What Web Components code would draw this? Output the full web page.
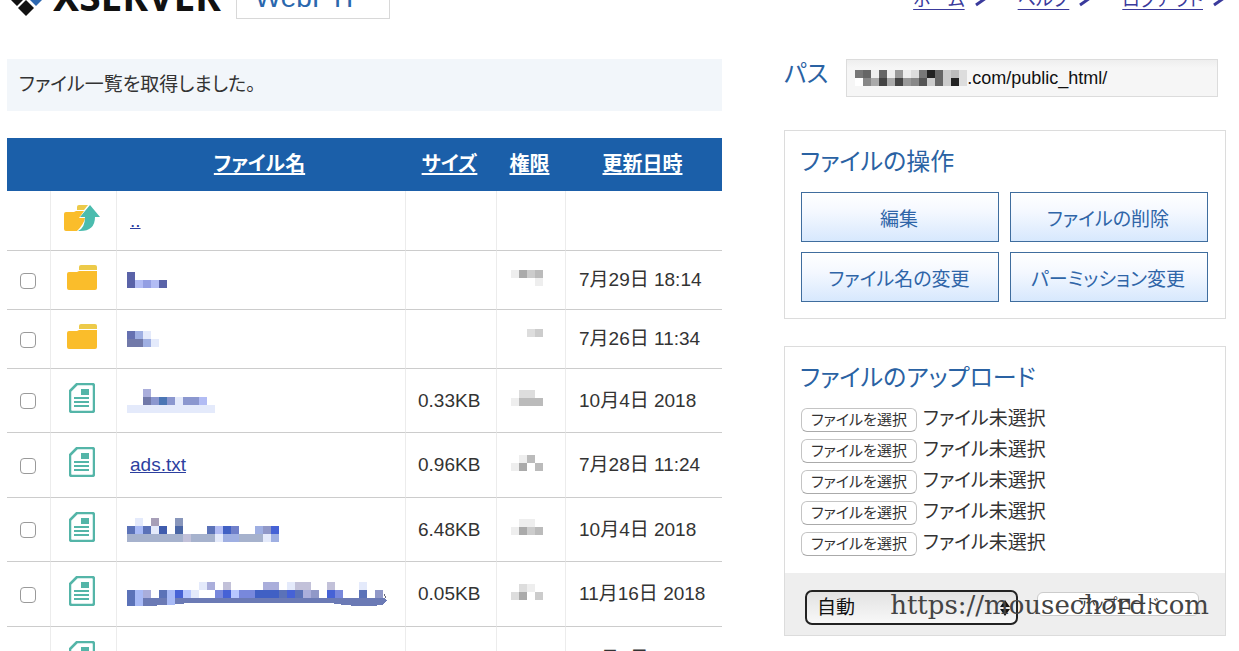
<!DOCTYPE html>
<html lang="ja">
<head>
<meta charset="utf-8">
<meta name="viewport" content="width=device-width, initial-scale=1">
<title>WebFTP</title>
<style>
html { scrollbar-width: none; }
body { margin: 0; background: #fff; color: #333; font: 19px/28px "Liberation Sans", "Noto Sans CJK JP", sans-serif; font-feature-settings: "palt"; }
</style>
</head>
<body>
<ftp-app></ftp-app>
<script>
function define(name, html, setup) {
  const template = document.createElement('template');
  template.innerHTML = '<style>*{box-sizing:border-box}button,input,select{font:inherit;font-feature-settings:inherit;margin:0}</style>' + html;
  customElements.define(name, class extends HTMLElement {
    constructor() {
      super();
      this.attachShadow({ mode: 'open' });
    }
    connectedCallback() {
      if (this.shadowRoot.childNodes.length) return;
      this.shadowRoot.append(template.content.cloneNode(true));
      if (setup) setup(this, this.shadowRoot);
    }
  });
}

/* Redacted text: 8px cells, hex digits are greys, capitals are palette colours */
const TINTS = {
  A: '#5a63a8', B: '#b2bcf4', C: '#949fe3', D: '#6570b0', E: '#9fafe2', L: '#e4eafb',
  G: '#7179a9', P: '#aaaedb', S: '#4b76b5', N: '#8b97cf', Q: '#a79fb8', T: '#8896bb',
  U: '#5b72b8', V: '#a8baf6', W: '#3f5cad', X: '#4a66a5', Y: '#4060c4', Z: '#7080ca',
  M: '#a6b2cd', K: '#c2c1d9', R: '#4662d6', H: '#b8c8ff', J: '#7888dc', I: '#9098c8'
};
define('pixel-mosaic', `
<style>:host{display:block}svg{display:block}</style><svg aria-hidden="true"></svg>`, (host, root) => {
  const rows = host.getAttribute('cells').split('/');
  const cols = Math.max(...rows.map(r => r.length));
  let out = '';
  rows.forEach((row, y) => [...row].forEach((c, x) => {
    if (c === '.') return;
    out += `<rect x="${x * 8}" y="${y * 8}" width="8" height="8" fill="${TINTS[c] || '#' + c + c + c}"/>`;
  }));
  if (host.hasAttribute('stroke')) {
    out += '<path d="M0 16H8V24H0Z" fill="#5b72b8"/><path d="M8 16H16V24H8Z" fill="#a8baf6"/><path d="M16 16H258L260 19L255 23Q232 26 204 21H80Q52 21 44 23L16 24Z" fill="#6b7ab5"/><path d="M40 16H48V23H40Z" fill="#a8baf6"/><path d="M257 12L259 16" stroke="#667" fill="none"/>';
  }
  const svg = root.querySelector('svg');
  svg.setAttribute('width', cols * 8 + (host.hasAttribute('stroke') ? 8 : 0));
  svg.setAttribute('height', rows.length * 8);
  svg.setAttribute('shape-rendering', 'crispEdges');
  svg.innerHTML = out;
});

const ICONS = {
  folder: '<svg width="30" height="25" viewBox="0 0 30 25"><path d="M12 5V2Q12 0 14 0H28Q30 0 30 2V5Z" fill="#edca49"/><path d="M0 9Q0 7 2 7H10L12 6H30V23Q30 25 28 25H2Q0 25 0 23Z" fill="#fabd2b"/></svg>',
  up: '<svg width="36" height="26" viewBox="0 0 36 26"><path d="M13 5V2Q13 0 15 0H24L20 5Z" fill="#edca49"/><path d="M0 9Q0 7 2 7H10L12 6H20L15 13H21Q20 19 13 26H2Q0 26 0 24Z" fill="#fabd2b"/><path d="M26 0L36 12H31Q31 26 16 26H14Q21 23 21 12H16Z" fill="#4bbcae"/></svg>',
  doc: '<svg width="26" height="30" viewBox="0 0 26 30"><path d="M8 1H23Q25 1 25 3V27Q25 29 23 29H3Q1 29 1 27V8Z" fill="none" stroke="#54b5a8" stroke-width="2.500" stroke-linejoin="round"/><path d="M12 6H20V12H12Z" fill="#54b5a8"/><path d="M5 15H20M5 19H20M5 23H20" stroke="#54b5a8" stroke-width="2"/></svg>'
};
define('file-icon', '<style>:host{display:block}svg{display:block;margin:0 auto}</style><span aria-hidden="true"></span>', (host, root) => {
  root.querySelector('span').innerHTML = ICONS[host.getAttribute('kind')];
});

const CHEVRON = '<svg width="14" height="18" viewBox="0 0 14 18" aria-hidden="true"><path d="M1 0L12 7L2 14" fill="none" stroke="#3a3a9c" stroke-width="3"/></svg>';
define('site-header', `
<style>
:host{display:flex;justify-content:space-between;align-items:flex-end;height:19px;overflow:hidden;padding:0 13px 0 11px}
.brand,nav{display:flex;align-items:flex-end}
svg.mark{display:block;margin-bottom:3px}
.name{font:bold 39px/39px "Noto Sans",sans-serif;color:#111;margin:0 15px 4px 10px}
.product{font:28px/32px "Liberation Sans",sans-serif;color:#2a67ad;border:1px solid #d8d8d8;padding:8px 24px 4px 18px}
nav{gap:30px;padding-bottom:0}
a{display:flex;align-items:center;gap:9px;color:#3a3a9c;font-size:18px;line-height:26px;text-decoration:none;margin-bottom:6px}
a span{text-decoration:underline;text-underline-offset:3px}
</style>
<div class="brand">
<svg class="mark" width="32" height="34" viewBox="0 0 32 34" aria-hidden="true"><path d="M15 18L23 26L15 34L7 26Z M6 8L14 16L6 24L-2 16Z M15 -2L23 6L15 14L7 6Z" fill="#111"/><path d="M25 8L33 16L25 24L17 16Z" fill="#2e68b0"/></svg>
<span class="name">XSERVER</span><span class="product">WebFTP</span>
</div>
<nav><a href="#"><span>ホーム</span>${CHEVRON}</a><a href="#"><span>ヘルプ</span>${CHEVRON}</a><a href="#"><span>ログアウト</span>${CHEVRON}</a></nav>`);

define('status-notice', `<style>:host{display:block;background:#f2f6fa;padding:12px}</style><slot></slot>`);

const FILES = [
  ['up', '<a href="#">..</a>', '', '', ''],
  ['folder', 'A..../ABCBA', '', 'eacb/...e', '7月29日 18:14'],
  ['folder', 'DEL./GGEL', '', '..dc/..f', '7月26日 11:34'],
  ['doc', '..P......../..GNSNLNNB/LLLLLLLLLLL', '0.33KB', '.dd../ebbbf', '10月4日 2018'],
  ['doc', '<a href="#">ads.txt</a>', '0.96KB', '.eb../ea.bf', '7月28日 11:24'],
  ['doc', '.L.Q..T............/UVULW.X...UBYZ..EIR/MMMMMMMKMMMLEEMMMLE', '6.48KB', '.ee../eacbf', '10月4日 2018'],
  ['doc', '.........LP.K....PP.LKK..K...L../UVP.UVRHL..JRHJJYYYURUPI.RJ..U.I/................................', '0.05KB', '.de./da.c', '11月16日 2018'],
  ['doc', '', '', '', '10月4日 2018']
];
define('file-table', `
<style>
:host{display:block}
table{width:100%;border-collapse:separate;border-spacing:0;table-layout:fixed}
.c-check{width:43px}.c-icon{width:66px}.c-size{width:91px}.c-mode{width:69px}.c-date{width:157px}
th{height:53px;background:#1b5fa9;padding:0 2px 1px 0;font-size:20px;font-weight:bold}
th a{color:#fff;text-underline-offset:2px;text-decoration-thickness:2px}
td{height:59px;padding:0;border-bottom:1px solid #ccc;border-left:1px solid #ececec;white-space:nowrap}
td:first-child{border-left:0}
tr.up td{height:60px}
tr.doc td{height:65px}
tr.doc:nth-child(even) td{height:64px}
td.icon{padding:0 4px 6px 0}
td.name{padding-left:13px}
td.name:has(pixel-mosaic){padding-left:10px}
td.name a{color:#2c3f9f}
td.size{padding-left:12px}
td.mode{padding:0 0 5px 14px}
td.date{padding-left:13px}
input{appearance:none;display:block;width:16px;height:16px;margin:1px auto 0 13px;border:1px solid #9a9a9a;border-radius:4px;background:#fff}
</style>
<table>
<colgroup><col class="c-check"><col class="c-icon"><col><col class="c-size"><col class="c-mode"><col class="c-date"></colgroup>
<thead><tr><th></th><th></th><th><a href="#">ファイル名</a></th><th><a href="#">サイズ</a></th><th><a href="#">権限</a></th><th><a href="#">更新日時</a></th></tr></thead>
<tbody></tbody>
</table>`, (host, root) => {
  root.querySelector('tbody').innerHTML = FILES.map(([kind, name, size, mode, date], i) => {
    const label = name.startsWith('<') || !name ? name : `<pixel-mosaic cells="${name}"${i === 6 ? ' stroke' : ''}></pixel-mosaic>`;
    return `<tr class="${kind}"><td>${i ? '<input type="checkbox" aria-label="選択">' : ''}</td>
<td class="icon"><file-icon kind="${kind}"></file-icon></td><td class="name">${label}</td>
<td class="size">${size}</td><td class="mode">${mode ? `<pixel-mosaic cells="${mode}"></pixel-mosaic>` : ''}</td><td class="date">${date}</td></tr>`;
  }).join('');
});

define('path-bar', `
<style>
:host{display:flex;align-items:flex-start;gap:18px;padding-right:8px}
label{font-size:24px;line-height:30px;color:#2a62a3}
.field{flex:1;min-width:0;display:flex;align-items:center;height:38px;padding-left:8px;border:1px solid #dcdcdc;background:linear-gradient(#eee,#f6f6f6 8px)}
input{flex:1;min-width:0;border:0;padding:0;background:none;color:#111;font-size:18px;line-height:24px;outline:0}
</style>
<label for="path">パス</label>
<div class="field"><pixel-mosaic cells="76e6e9ed726cbd/f8a4a4985c6c2d"></pixel-mosaic><input id="path" type="text" value=".com/public_html/"></div>`);

define('side-panel', `
<style>
:host{display:block;border:1px solid #dcdcdc;background:#fff}
h2{margin:0;padding:15px 16px 0 15px;font-weight:normal;font-size:24px;line-height:32px;color:#2a62a3}
.body{padding:14px 17px 16px 16px}
:host([compact]) .body{padding:10px 16px 14px}
</style>
<h2><slot name="title"></slot></h2><div class="body"><slot></slot></div><slot name="footer"></slot>`);

define('action-grid', `
<style>
:host{display:grid;grid-template-columns:1fr 1fr;gap:10px 11px}
button{height:50px;border:1px solid #3f6d9e;background:linear-gradient(#fff,#f4f8ff 40%,#d7e8fd);color:#2f65a8;font-size:19px;line-height:24px;padding:6px 2px 0 0}
</style>
<button>編集</button><button>ファイルの削除</button><button>ファイル名の変更</button><button>パーミッション変更</button>`);

define('file-picker', `
<style>
:host{display:flex;align-items:center;gap:6px;height:31px}
button{width:116px;height:24px;padding:0;border:1px solid #c4c4c4;border-bottom-color:#aaa;border-radius:6px;background:#fff;color:#333;font-size:15px;line-height:20px}
span{padding-bottom:2px}
</style>
<button>ファイルを選択</button><span>ファイル未選択</span>`);

define('upload-bar', `
<style>
:host{display:flex;align-items:flex-start;gap:19px;position:relative;height:62px;padding:17px 26px 0 20px;background:#eee}
.select{display:grid;flex:215;align-items:center}
select,.select svg{grid-area:1/1}
select{appearance:none;width:100%;height:35px;border:2px solid #222;border-radius:7px;background:linear-gradient(#e2e2e2,#f8f8f8);color:#111;padding:0 10px;font-size:19px;line-height:28px}
.select svg{justify-self:end;margin-right:7px;pointer-events:none}
button{flex:161;height:24px;margin-top:2px;padding:0;border:1px solid #ccc;border-radius:6px;background:#fff;color:#333;font-size:15px;line-height:20px}
.mark{position:absolute;right:16px;top:14px;font:26px/36px "DejaVu Serif",serif;color:#444}
</style>
<div class="select"><select aria-label="文字コード"><option>自動</option></select><svg width="12" height="16" viewBox="0 0 12 16" aria-hidden="true"><path d="M1 7L6 0L11 7ZM1 9L6 16L11 9Z" fill="#111"/></svg></div>
<button>アップロード</button>
<span class="mark">https://mousechord.com</span>`);

define('ftp-app', `
<style>
:host{display:block}
main{display:grid;grid-template-columns:715fr 442fr;gap:62px;align-items:start;padding:40px 13px 0 7px}
status-notice{margin-bottom:27px}
path-bar{margin-bottom:33px}
side-panel + side-panel{margin-top:27px}
</style>
<site-header></site-header>
<main>
<section><status-notice>ファイル一覧を取得しました。</status-notice><file-table></file-table></section>
<aside>
<path-bar></path-bar>
<side-panel><span slot="title">ファイルの操作</span><action-grid></action-grid></side-panel>
<side-panel compact><span slot="title">ファイルのアップロード</span><file-picker></file-picker><file-picker></file-picker><file-picker></file-picker><file-picker></file-picker><file-picker></file-picker><upload-bar slot="footer"></upload-bar></side-panel>
</aside>
</main>`);
</script>
</body>
</html>
